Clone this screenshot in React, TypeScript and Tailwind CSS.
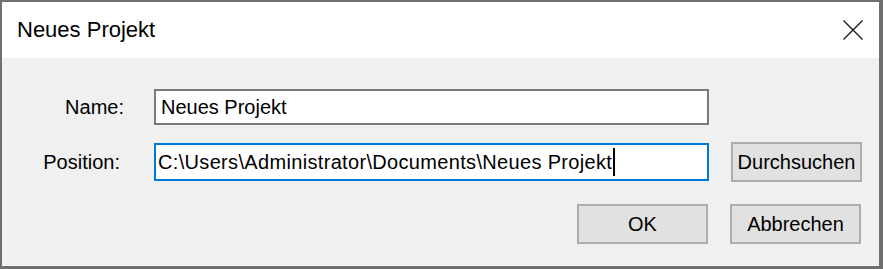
import React from 'react';

const font = { fontFamily: '"Liberation Sans", Arial, sans-serif' };

function CloseIcon() {
  return (
    <svg width="20" height="20" viewBox="0 0 20 20" aria-hidden="true">
      <path d="M0.5 0.5 L19.5 19.5 M19.5 0.5 L0.5 19.5" stroke="#1b1b1b" strokeWidth="1.4" fill="none" />
    </svg>
  );
}

function Button({ children }: { children: React.ReactNode }) {
  return (
    <div className="w-[131px] h-[40px] flex items-center justify-center bg-[#e1e1e1] border-2 border-[#adadad] text-[20px] text-black">
      {children}
    </div>
  );
}

export default function App() {
  return (
    <div
      className="w-[883px] h-[269px] bg-[#6f6f6f] pl-[2px] pt-[2px] pr-[4px] pb-[3px] flex"
      style={font}
    >
      <div className="flex-1 flex flex-col">
        {/* Title bar */}
        <div className="h-[56px] bg-white flex items-center justify-between pl-[15px] pr-[16px]">
          <span className="text-[22px] text-black pb-[1px]">Neues Projekt</span>
          <CloseIcon />
        </div>

        {/* Body */}
        <div className="flex-1 bg-[#f0f0f0] border-b border-[#fafafa] pt-[31px]">
          <div className="flex items-center h-[36px]">
            <div className="w-[152px] text-right pr-[30px] text-[20px] text-black">Name:</div>
            <div className="w-[555px] h-[36px] bg-white border-2 border-[#7a7a7a] flex items-center pl-[5px] text-[20px] text-black">
              Neues Projekt
            </div>
          </div>

          <div className="flex items-center h-[39px] mt-[17px]">
            <div className="w-[152px] text-right pr-[34px] text-[20px] text-black">Position:</div>
            <div className="w-[555px] h-[38px] bg-white border-2 border-[#0078d7] flex items-center pl-[2px] text-[20px] text-black">
              <span className="tracking-[0.33px]">C:\Users\Administrator\Documents\Neues Projekt</span>
              <span className="w-[2px] h-[28px] bg-black ml-[1px]" />
            </div>
            <div className="ml-[22px]">
              <Button>Durchsuchen</Button>
            </div>
          </div>

          <div className="flex items-center justify-end mt-[23px] pr-[18px] gap-[22px]">
            <Button>OK</Button>
            <Button>Abbrechen</Button>
          </div>
        </div>
      </div>
    </div>
  );
}
